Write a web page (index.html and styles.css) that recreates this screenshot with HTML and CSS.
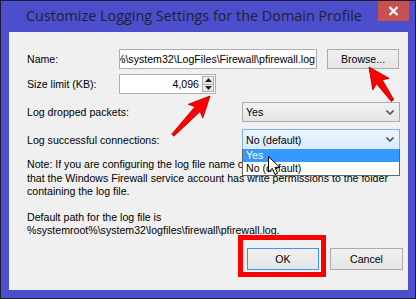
FILE: index.html
```html
<!DOCTYPE html>
<html>
<head>
<meta charset="utf-8">
<link rel="stylesheet" href="styles.css">
</head>
<body>
<div class="window">
  <div class="titlebar">
    <span class="title">Customize Logging Settings for the Domain Profile</span>
    <div class="close">
      <svg width="11" height="10" viewBox="0 0 11 10"><path d="M1.5 1 L9.5 9 M9.5 1 L1.5 9" stroke="#fff" stroke-width="2.2" fill="none"/></svg>
    </div>
  </div>
  <div class="client">
    <div class="row r-name">
      <span class="label fixed">Name:</span>
      <div class="textbox path"><span>%systemroot%\system32\LogFiles\Firewall\pfirewall.log</span></div>
      <div class="button browse">Browse...</div>
    </div>
    <div class="row r-size">
      <span class="label fixed">Size limit (KB):</span>
      <div class="textbox spin">
        <span class="val">4,096</span>
        <div class="spinbtns">
          <div class="sb"><svg width="7" height="4" viewBox="0 0 7 4"><path d="M0 4 L3.5 0 L7 4Z" fill="#222"/></svg></div>
          <div class="sb"><svg width="7" height="4" viewBox="0 0 7 4"><path d="M0 0 L3.5 4 L7 0Z" fill="#222"/></svg></div>
        </div>
      </div>
    </div>
    <div class="row r-drop">
      <span class="label grow">Log dropped packets:</span>
      <div class="combo">
        <span class="ctext">Yes</span>
        <svg class="chev" width="8" height="5" viewBox="0 0 8 5"><path d="M0.5 0.5 L4 4 L7.5 0.5" stroke="#555" stroke-width="1.6" fill="none"/></svg>
      </div>
    </div>
    <div class="row r-succ">
      <span class="label grow">Log successful connections:</span>
      <div class="combo focused">
        <span class="ctext">No (default)</span>
        <svg class="chev" width="8" height="5" viewBox="0 0 8 5"><path d="M0.5 0.5 L4 4 L7.5 0.5" stroke="#555" stroke-width="1.6" fill="none"/></svg>
        <div class="droplist">
          <div class="opt sel">Yes</div>
          <div class="opt">No (default)</div>
        </div>
      </div>
    </div>
    <p class="note">Note: If you are configuring the log file name on Group Policy object, ensure<br>that the Windows Firewall service account has write permissions to the folder<br>containing the log file.</p>
    <p class="default">Default path for the log file is<br>%systemroot%\system32\logfiles\firewall\pfirewall.log.</p>
    <div class="buttons">
      <div class="button ok">OK</div>
      <div class="button cancel">Cancel</div>
    </div>
  </div>
  <svg class="annot" width="416" height="299" viewBox="0 0 416 299">
    <rect x="240.5" y="237.5" width="83" height="37" fill="none" stroke="#f00" stroke-width="5"/>
    <g transform="translate(210,96) rotate(-46.5)">
      <path d="M0 0 L-21 -10 L-18 -3.5 L-54 -1.5 L-54 1.5 L-18 3.5 L-21 10 Z" fill="#f00" stroke="#b00000" stroke-width="0.8"/>
    </g>
    <g transform="translate(369,67) rotate(-125)">
      <path d="M0 0 L-21 -10 L-18 -3.5 L-41 -1.5 L-41 1.5 L-18 3.5 L-21 10 Z" fill="#f00" stroke="#b00000" stroke-width="0.8"/>
    </g>
    <g transform="translate(268,156)">
      <path d="M0.5 0.5 L0.5 16 L4.3 12.4 L7 18.5 L9.6 17.3 L7 11.4 L11.8 11.4 Z" fill="#fff" stroke="#000" stroke-width="1"/>
    </g>
  </svg>
</div>
</body>
</html>
```
FILE: styles.css
```css
html, body {
  margin: 0;
  padding: 0;
  background: #4b4fcb;
}

.window {
  position: relative;
  width: 416px;
  height: 299px;
  box-sizing: border-box;
  border: 1px solid #1c1c3a;
  background: #4b4fcb;
  display: flex;
  flex-direction: column;
  overflow: hidden;
}

.titlebar {
  height: 31px;
  flex: none;
  display: flex;
  align-items: flex-start;
  padding-left: 25px;
}

.title {
  font-family: "Open Sans", "Noto Sans", sans-serif;
  font-size: 14.4px;
  line-height: 30px;
  color: #1f1f33;
  white-space: nowrap;
}

.close {
  margin-left: auto;
  margin-right: 6px;
  width: 31px;
  height: 20px;
  background: #c75050;
  display: flex;
  align-items: center;
  justify-content: center;
}

.client {
  flex: 1;
  margin: 0 7px 8px 8px;
  background: #f0f0f0;
  padding: 17px 8px 0 18px;
  font-family: "Liberation Sans", Arial, sans-serif;
  font-size: 10.6px;
  color: #000;
  display: flex;
  flex-direction: column;
}

.row {
  display: flex;
  align-items: center;
  height: 20px;
  flex: none;
}

.r-size { margin-top: 5px; }
.r-drop { margin-top: 8px; }
.r-succ { margin-top: 7px; height: 21px; }

.label { white-space: nowrap; }
.label.fixed { width: 92px; flex: none; }
.label.grow { flex: 1; }

.textbox {
  box-sizing: border-box;
  height: 20px;
  background: #fff;
  border: 1px solid #abadb3;
  display: flex;
  align-items: center;
  overflow: hidden;
}

.path {
  width: 198px;
  justify-content: flex-end;
  padding-right: 1px;
}

.path span { white-space: nowrap; flex: none; }

.browse {
  margin-left: 10px;
  margin-right: 1px;
  width: 72px;
  height: 20px;
}

.spin {
  width: 97px;
  justify-content: flex-end;
  padding-right: 1px;
}

.spin .val { margin-right: 3px; }

.spinbtns {
  display: flex;
  flex-direction: column;
  width: 12px;
  height: 16px;
}

.sb {
  flex: 1;
  box-sizing: border-box;
  border: 1px solid #acacac;
  background: linear-gradient(#f2f2f2, #e5e5e5);
  display: flex;
  align-items: center;
  justify-content: center;
}

.sb + .sb { border-top: none; }

.combo {
  position: relative;
  box-sizing: border-box;
  width: 158px;
  height: 100%;
  border: 1px solid #acacac;
  background: linear-gradient(#f2f2f2, #e5e5e5);
  display: flex;
  align-items: center;
  padding-left: 3px;
  padding-right: 5px;
}

.combo.focused {
  border-color: #7eb4ea;
  background: linear-gradient(#eaf3fd, #d9ebfc);
}

.ctext { flex: 1; }

.chev { flex: none; }

.droplist {
  position: absolute;
  left: -1px;
  right: -1px;
  top: 100%;
  box-sizing: border-box;
  border: 1px solid #646464;
  border-top: none;
  background: #fff;
  z-index: 2;
}

.opt {
  height: 13px;
  line-height: 13px;
  padding-left: 3px;
}

.opt.sel {
  background: #3399ff;
  color: #fff;
}

.note {
  margin: 8px 0 0 0;
  line-height: 13.5px;
  white-space: nowrap;
  overflow: hidden;
}

.default {
  margin: 12px 0 0 0;
  line-height: 13.5px;
  white-space: nowrap;
}

.buttons {
  display: flex;
  justify-content: flex-end;
  gap: 11px;
  margin-top: 10px;
  margin-right: -3px;
}

.button {
  box-sizing: border-box;
  border: 1px solid #acacac;
  background: linear-gradient(#f0f0f0, #e5e5e5);
  display: flex;
  align-items: center;
  justify-content: center;
  white-space: nowrap;
}

.ok {
  width: 72px;
  height: 22px;
  border-color: #3399ff;
}

.cancel {
  width: 73px;
  height: 22px;
}

.annot {
  position: absolute;
  left: -1px;
  top: -1px;
  pointer-events: none;
  z-index: 5;
}
```
